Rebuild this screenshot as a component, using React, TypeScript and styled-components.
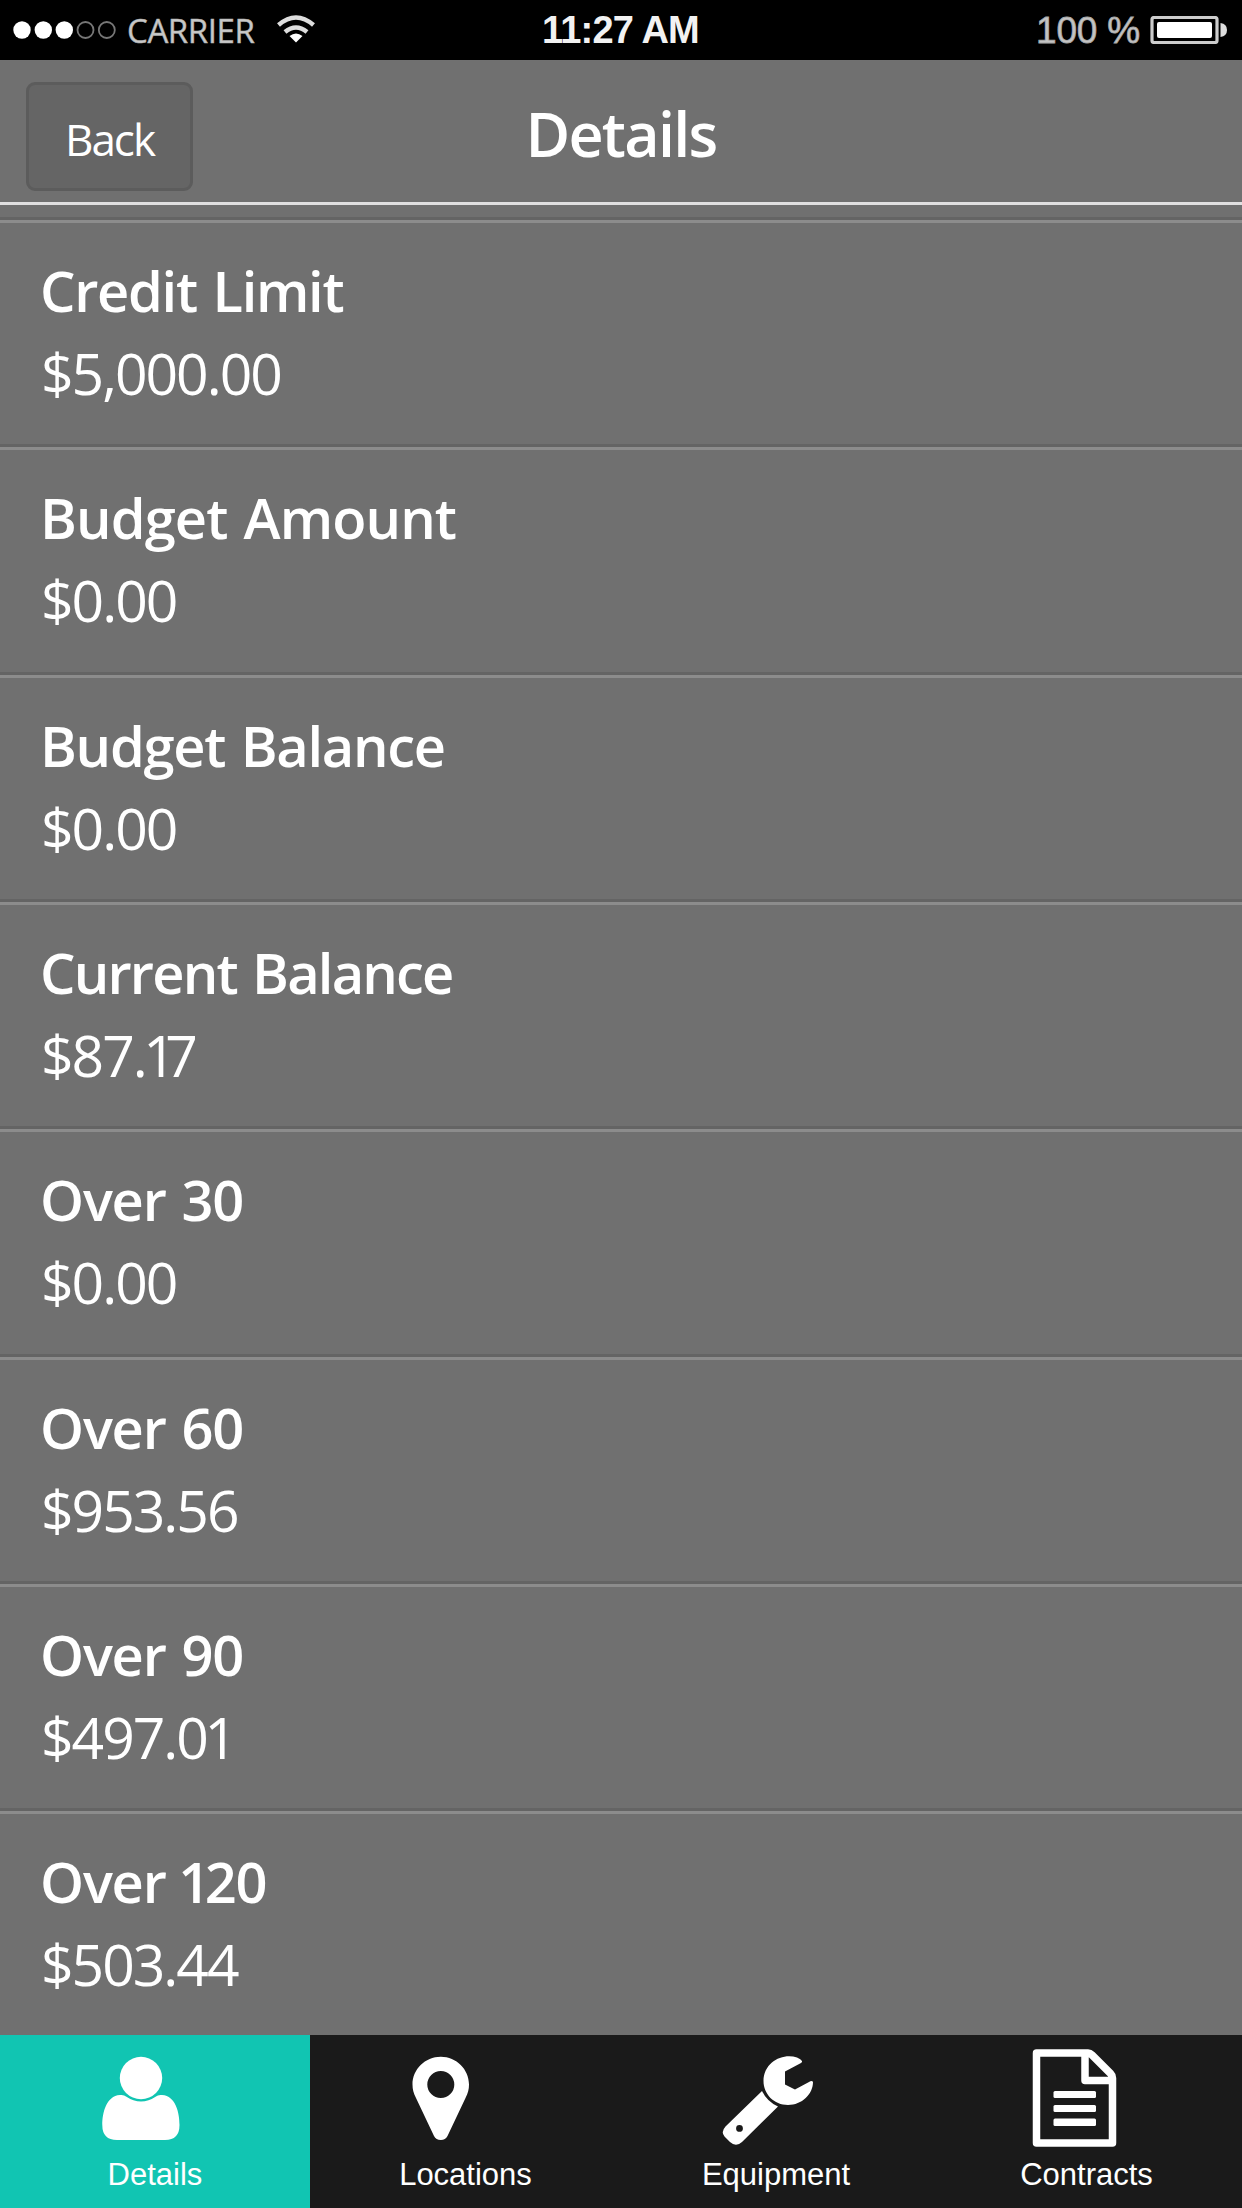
import React from 'react';
import styled, { createGlobalStyle } from 'styled-components';

const Global = createGlobalStyle`
  * { box-sizing: border-box; }
  body { margin: 0; background: #707070; }
`;

const Screen = styled.div`
  width: 1242px;
  height: 2208px;
  display: flex;
  flex-direction: column;
  overflow: hidden;
  background: #707070;
  color: #fff;
  font-family: 'Open Sans', sans-serif;
`;

const StatusBar = styled.div`
  flex: none;
  height: 60px;
  padding: 0 14px 0 13px;
  display: grid;
  grid-template-columns: 1fr auto 1fr;
  align-items: center;
  background: #000;
`;

const StatusGroup = styled.div<{ $end?: boolean }>`
  display: flex;
  align-items: center;
  justify-content: ${(p) => (p.$end ? 'flex-end' : 'flex-start')};
`;

const Carrier = styled.span`
  margin: 2px 22px 0 10px;
  font: 400 33px/32px 'Open Sans', sans-serif;
  letter-spacing: -0.4px;
  color: #c8c8c8;
  -webkit-text-stroke: 0.5px #b0b0b0;
`;

const Clock = styled.span`
  font: 700 38px/60px 'Liberation Sans', sans-serif;
  letter-spacing: -0.8px;
  color: #f2f2f2;
`;

const Percent = styled.span`
  margin-right: 10px;
  padding-top: 1px;
  font: 400 37px/59px 'Liberation Sans', sans-serif;
  letter-spacing: -0.2px;
  color: #c4c4c4;
  -webkit-text-stroke: 0.8px #a8a8a8;
`;

const Header = styled.header`
  flex: none;
  height: 145px;
  padding: 22px 26px 0;
  display: grid;
  grid-template-columns: 1fr auto 1fr;
  align-items: start;
  border-bottom: 3px solid #e0dfe0;
`;

const BackButton = styled.button`
  width: 167px;
  height: 109px;
  padding: 4px 0 0;
  border: 3px solid #5c5c5c;
  border-radius: 9px;
  background: #656565;
  color: #fff;
  font: 400 44px/60px 'Open Sans', sans-serif;
  letter-spacing: -2px;
`;

const Title = styled.h1`
  margin: 0;
  font: 600 61px/104px 'Open Sans', sans-serif;
  letter-spacing: -1.7px;
`;

const List = styled.main`
  flex: 1;
  min-height: 0;
  padding-top: 12px;
  overflow: hidden;
`;

const Entry = styled.section`
  height: 227.35px;
  padding: 32px 0 0 40px;
  border-top: 3px solid #646464;
  box-shadow: inset 0 3px 0 #8c8c8c;
`;

const Label = styled.div<{ $tracking: number }>`
  font: 600 56px/76px 'Open Sans', sans-serif;
  letter-spacing: ${(p) => p.$tracking}px;
  word-spacing: 2.5px;
  white-space: nowrap;
`;

const Value = styled.div`
  margin-top: 7px;
  padding-left: 1px;
  font: 400 57px/76px 'Open Sans', sans-serif;
  letter-spacing: -2px;
`;

const Tracked = styled.span<{ $by: number }>`
  letter-spacing: ${(p) => p.$by}px;
`;

const TabBar = styled.nav`
  flex: none;
  height: 173px;
  display: grid;
  grid-template-columns: 310px 311px 310px 311px;
  background: #1a1a1a;
`;

const Tab = styled.a<{ $active?: boolean }>`
  display: flex;
  flex-direction: column;
  align-items: center;
  background: ${(p) => (p.$active ? '#11c5b2' : '#1a1a1a')};
`;

const TabIcon = styled.svg`
  flex: none;
  width: 126px;
  height: 120px;
  fill: #fff;
`;

const TabLabel = styled.span`
  padding-top: 1px;
  font: 400 31px/38px 'Liberation Sans', sans-serif;
`;

const entries: { label: string; value: string; tracking: number }[] = [
  { label: 'Credit Limit', value: '$5,000.00', tracking: -1.3 },
  { label: 'Budget Amount', value: '$0.00', tracking: -0.9 },
  { label: 'Budget Balance', value: '$0.00', tracking: -1.3 },
  { label: 'Current Balance', value: '$87.17', tracking: -1.8 },
  { label: 'Over 30', value: '$0.00', tracking: -1.2 },
  { label: 'Over 60', value: '$953.56', tracking: -1.2 },
  { label: 'Over 90', value: '$497.01', tracking: -1.2 },
  { label: 'Over 120', value: '$503.44', tracking: -1.2 },
];

// Tightens the space on both sides of the digit 1, which is narrower than the others.
const fitDigits = (text: string, after: number) =>
  text.split(/(.1)/).map((part, i) =>
    i % 2 === 1 ? (
      <React.Fragment key={i}>
        <Tracked $by={-4.5}>{part[0]}</Tracked>
        <Tracked $by={after}>1</Tracked>
      </React.Fragment>
    ) : (
      part
    ),
  );

const tabs = [
  {
    name: 'Details',
    active: true,
    icon: (
      <>
        <circle cx="49" cy="43" r="21.2" />
        <path d="M28 60 Q32 59.500 34 61.500 Q49 71.500 64 61.500 Q66 59.500 70 60 C84 61 87.500 78 87.500 90 Q87.500 105 73 105 H25 Q10.300 105 10.300 90 C10.300 78 14 61 28 60Z" />
      </>
    ),
  },
  {
    name: 'Locations',
    icon: (
      <path
        fillRule="evenodd"
        d="M37.800 21.800 C53.500 21.800 66 34.500 66 49.500 C66 54.500 65 58 62.500 63 L44.500 101 Q42.500 105 37.800 105 Q33 105 31 101 L13 63 C10.500 58 9.500 54.500 9.500 49.500 C9.500 34.500 22 21.800 37.800 21.800Z M37.800 36 A13.500 13.500 0 1 0 37.800 63 A13.500 13.500 0 1 0 37.800 36Z"
      />
    ),
  },
  {
    name: 'Equipment',
    icon: (
      <>
        <path d="M89 26 Q88 24 84 22.500 C70 17.500 50.500 27 50.500 46 C50.500 59 61 70 75 70 C89 70 100 59 100 47 Q99 45 96 47 L82 54.500 L72 49.500 V36.500 L88 28 Q89.500 27 89 26Z" />
        <path
          fillRule="evenodd"
          d="M49 56 Q54 66.500 65 71.500 L29 107 Q23 112.500 17 107 L11.500 101.500 Q7.500 97 12.500 91.500Z M26.500 90 A3.300 3.300 0 1 0 26.500 96.800 A3.300 3.300 0 1 0 26.500 90Z"
        />
      </>
    ),
  },
  {
    name: 'Contracts',
    icon: (
      <>
        <path
          fill="none"
          stroke="#fff"
          strokeWidth="7.500"
          strokeLinejoin="round"
          d="M12.500 18 H64 Q66 18 68 20 L86.500 38.500 Q88.500 40.500 88.500 43 V108 H12.500Z M61 18 V45.500 H88"
        />
        <rect x="29.500" y="56" width="42.500" height="7" rx="1.500" />
        <rect x="29.500" y="70" width="42.500" height="7" rx="1.500" />
        <rect x="29.500" y="83.500" width="42.500" height="7.500" rx="1.500" />
      </>
    ),
  },
];

export default function App() {
  return (
    <Screen>
      <Global />
      <StatusBar>
        <StatusGroup>
          <svg width="104" height="22" viewBox="0 0 104 22">
            <g fill="#fff">
              <circle cx="9" cy="11" r="8.700" />
              <circle cx="30.300" cy="11" r="8.700" />
              <circle cx="51.300" cy="11" r="8.700" />
            </g>
            <g fill="none" stroke="#777" strokeWidth="1.800">
              <circle cx="72.500" cy="11" r="8" />
              <circle cx="93.800" cy="11" r="8" />
            </g>
          </svg>
          <Carrier>CARRIER</Carrier>
          <svg width="38" height="30" viewBox="0 0 38 30">
            <g fill="none" stroke="#ddd" strokeWidth="4.500">
              <path d="M1.500 10 Q19 -5 36.500 10" />
              <path d="M8 17 Q19 8 30 17" />
            </g>
            <path d="M12.500 21 Q19 16 25.500 21 L19 27.500Z" fill="#fff" />
          </svg>
        </StatusGroup>
        <Clock>11:27 AM</Clock>
        <StatusGroup $end>
          <Percent>100 %</Percent>
          <svg width="78" height="28" viewBox="0 0 78 28">
            <rect x="2" y="1.500" width="65" height="25" rx="2" fill="none" stroke="#ccc" strokeWidth="3.200" />
            <rect x="7" y="6" width="55" height="16" rx="2" fill="#fff" />
            <path d="M70.500 7 Q77 8 77 14 Q77 20 70.500 21Z" fill="#ddd" />
          </svg>
        </StatusGroup>
      </StatusBar>
      <Header>
        <BackButton>Back</BackButton>
        <Title>Details</Title>
      </Header>
      <List>
        {entries.map(({ label, value, tracking }) => (
          <Entry key={label}>
            <Label $tracking={tracking}>{fitDigits(label, -5.5)}</Label>
            <Value>{fitDigits(value, -10.5)}</Value>
          </Entry>
        ))}
      </List>
      <TabBar>
        {tabs.map((tab) => (
          <Tab key={tab.name} $active={tab.active}>
            <TabIcon viewBox="0 0 126 120">{tab.icon}</TabIcon>
            <TabLabel>{tab.name}</TabLabel>
          </Tab>
        ))}
      </TabBar>
    </Screen>
  );
}
